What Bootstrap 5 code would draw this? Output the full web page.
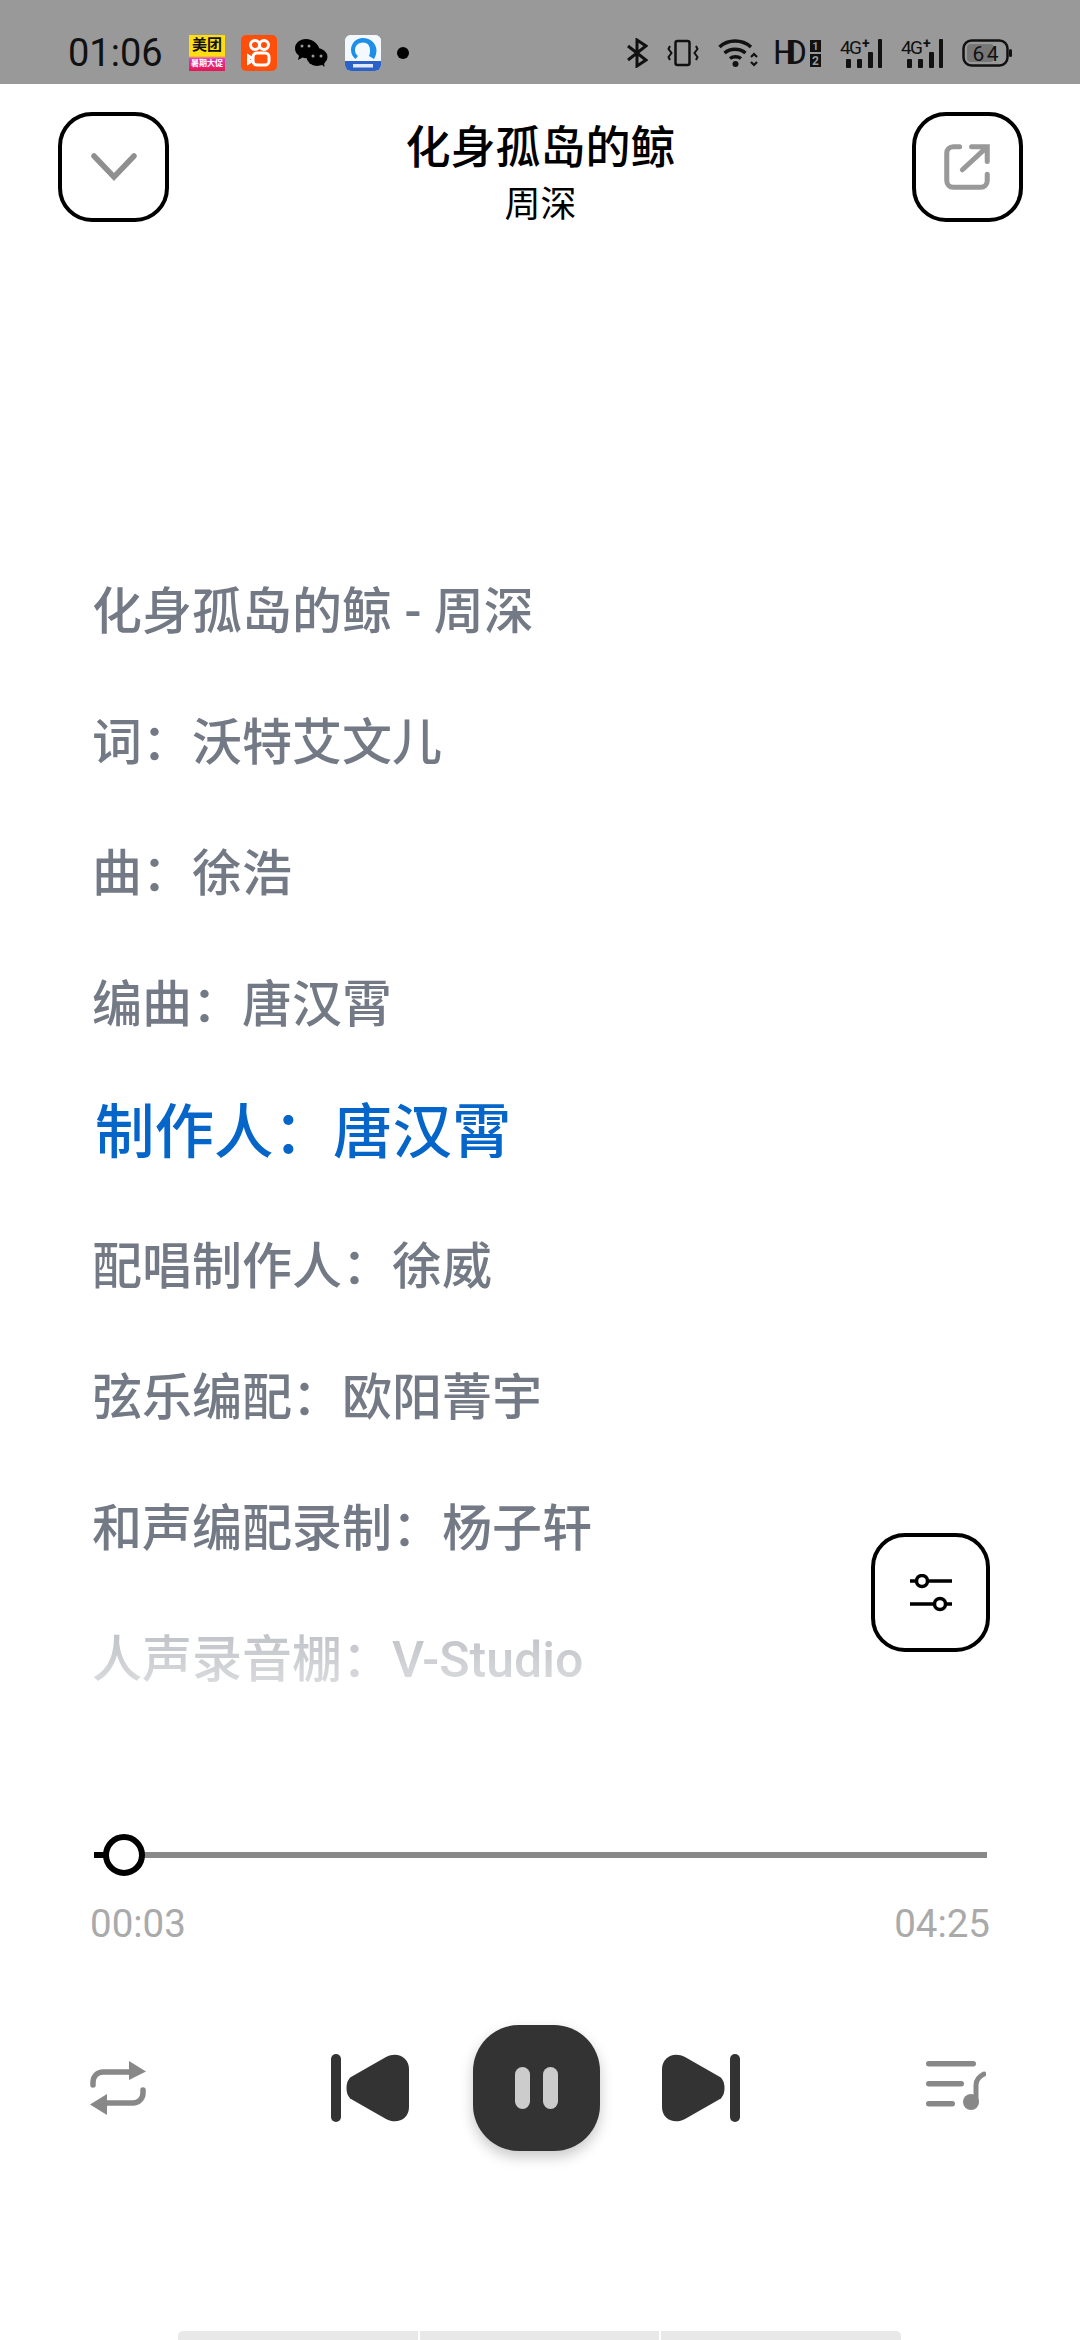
<!DOCTYPE html>
<html lang="zh-CN">
<head>
    <meta charset="UTF-8">
    <meta name="viewport" content="width=device-width, initial-scale=1.0">
    <link href="https://cdn.jsdelivr.net/npm/bootstrap@5.3.3/dist/css/bootstrap.min.css" rel="stylesheet">
    <script src="https://cdn.jsdelivr.net/npm/bootstrap@5.3.3/dist/js/bootstrap.bundle.min.js"></script>
    <style>
        html, body { margin: 0; background: #fff; }
        body { width: 1080px; height: 2340px; overflow: hidden; font-family: Roboto, "Noto Sans CJK SC", sans-serif; }
        .page-wrap { height: 2340px; position: relative; }

        /* status bar */
        .status-bar { height: 84px; background: #999; padding: 22px 68px 0; color: #111; flex: none; }
        .status-time { font-size: 38px; width: 92px; line-height: 1; margin-right: 29px; font-weight: 400; }
        .status-left { gap: 16px; }
        .status-right { gap: 19px; height: 50px; }
        .hd-mark { margin-left: -4px; }
        .status-bar svg { display: block; }
        .mt-logo { width: 36px; height: 36px; background: linear-gradient(#ffdd14 0 58%, #d93cc0 66%, #e8154f 100%); color: #111; overflow: hidden; font-weight: 700; }
        .mt-top { font-size: 15px; line-height: 21px; height: 21px; }
        .mt-sub { font-size: 8px; line-height: 15px; height: 15px; color: #fff; }
        .ks-logo { width: 36px; height: 36px; background: #ff4f0a; border-radius: 5px; }
        .qq-logo { width: 36px; height: 36px; background: #fff; border-radius: 6px; overflow: hidden; }

        /* top bar */
        .top-bar { height: 140px; padding: 28px 57px 0 58px; flex: none; }
        .square-btn { width: 111px; height: 110px; border: 4.5px solid #000; border-radius: 34px; background: #fff; padding: 0; flex: none; }
        .song-head { text-align: center; color: #000; }
        .song-title { font-size: 45px; line-height: 66px; font-weight: 500; margin: 0; font-family: "Noto Sans CJK SC", sans-serif; }
        .song-artist { font-size: 36px; line-height: 44px; margin-top: 1px; font-family: "Noto Sans CJK SC", sans-serif; font-weight: 400; }

        /* lyrics */
        .lyric-pane { height: 1500px; padding: 323px 0 0 92px; flex: none;
            -webkit-mask-image: linear-gradient(#000 0, #000 1345px, rgba(0,0,0,.5) 1395px, rgba(0,0,0,.24) 1470px, transparent 1490px);
            mask-image: linear-gradient(#000 0, #000 1345px, rgba(0,0,0,.5) 1395px, rgba(0,0,0,.24) 1470px, transparent 1490px); }
        .lyric-line { height: 131px; line-height: 131px; font-size: 50px; font-weight: 500; color: #747a85; white-space: nowrap; margin: 0; }
        .lyric-line.now { font-size: 59.5px; color: #0565c8; padding-left: 3px; line-height: 125px; }

        .tune-btn { position: absolute; left: 871px; top: 1533px; width: 119px; height: 119px; border: 4.5px solid #000; border-radius: 34px; background: #fff; padding: 0; }

        /* progress */
        .seek-wrap { position: absolute; left: 94px; right: 93px; top: 1834px; height: 42px; }
        .seek-track { height: 6px; background: #888; width: 100%; }
        .seek-done { height: 6px; width: 12px; background: #000; }
        .seek-thumb { position: absolute; left: 9px; top: 0; width: 42px; height: 42px; border: 6px solid #000; border-radius: 50%; background: #fff; }
        .time-row { position: absolute; left: 90px; right: 90px; top: 1901px; font-size: 38.500px; line-height: 46px; color: #aaa; font-family: Roboto, sans-serif; }

        /* controls */
        .ctl-row { position: absolute; left: 0; right: 0; top: 2025px; height: 126px; }
        .ctl-btn { background: none; border: 0; padding: 0; position: absolute; line-height: 0; }
        .ctl-repeat { left: 90px; top: 34px; }
        .ctl-prev { left: 331px; top: 29px; }
        .ctl-next { left: 661px; top: 29px; }
        .ctl-list { left: 926px; top: 36px; }
        .play-btn { position: absolute; left: 473px; top: 0; width: 127px; height: 126px; background: #333; border: 0; border-radius: 46px; box-shadow: 0 6px 14px rgba(0,0,0,.22); gap: 13px; padding: 0; }
        .pause-bar { width: 15px; height: 42px; background: #ccc; border-radius: 8px; }

        /* bottom handle */
        .home-strip { position: absolute; left: 178px; width: 723px; bottom: 0; height: 9px; gap: 2px; }
        .home-strip div { flex: 1; background: #e8e8e8; }
        .home-strip div:first-child { border-radius: 5px 0 0 0; }
        .home-strip div:last-child { border-radius: 0 5px 0 0; }
    </style>
    <title>化身孤岛的鲸</title>
</head>
<body>
<div class="page-wrap d-flex flex-column">

    <div class="status-bar d-flex align-items-center">
        <div class="status-time">01:06</div>
        <div class="d-flex align-items-center status-left">
            <div class="mt-logo text-center">
                <div class="mt-top">美团</div>
                <div class="mt-sub">暑期大促</div>
            </div>
            <div class="ks-logo d-flex align-items-center justify-content-center">
                <svg width="24" height="30" viewBox="0 0 24 30" fill="none" stroke="#fff" stroke-width="3">
                    <circle cx="8" cy="7" r="4.500"/><circle cx="17" cy="7" r="4.500"/>
                    <rect x="6" y="15" width="16" height="12" rx="4"/>
                    <path d="M6 21 1.500 18v7L6 22"/>
                </svg>
            </div>
            <svg width="36" height="30" viewBox="0 0 36 30">
                <path d="M13 1C6.500 1 2 5.300 2 10.500c0 3 1.500 5.500 4 7.300L5 22l4.500-2.400c1.500.4 3 .6 4.500.5 2-5 8-8 13-7C26 6 20 1 13 1z" fill="#000"/>
                <ellipse cx="24" cy="19" rx="10.500" ry="9" fill="#000"/>
                <path d="M28 26l3.500 3-.5-5z" fill="#000"/>
                <circle cx="9" cy="8" r="1.500" fill="#999"/><circle cx="16" cy="8" r="1.500" fill="#999"/>
                <circle cx="20" cy="18" r="1.500" fill="#999"/><circle cx="28" cy="18" r="1.500" fill="#999"/>
            </svg>
            <div class="qq-logo">
                <svg width="36" height="36" viewBox="0 0 36 36">
                    <rect x="0" y="0" width="36" height="27" fill="#f4f9ff"/>
                    <path d="M18 3C11 3 6 8.500 6 15c0 4 2 7 4.500 9l2.500-3c-2-1.500-3-3.500-3-6 0-4.500 3.500-7.500 8-7.500s7 3 7 7.500c0 2 0 4-1 6l5 3c1.500-2.500 2.500-5.500 2.500-9C31 8 25.500 3 18 3z" fill="#1d8fe8"/>
                    <rect x="0" y="26" width="36" height="10" fill="#2a62c8"/>
                    <rect x="8" y="29" width="20" height="3.500" fill="#dfe9fb"/>
                </svg>
            </div>
            <svg width="12" height="12" viewBox="0 0 12 12"><circle cx="6" cy="6" r="6" fill="#000"/></svg>
        </div>

        <div class="d-flex align-items-center status-right ms-auto">
            <svg width="22" height="30" viewBox="0 0 22 30" fill="none" stroke="#111" stroke-width="3">
                <path d="M2 8l18 14-9 6V2l9 6L2 22"/>
            </svg>
            <svg width="32" height="28" viewBox="0 0 32 28" fill="none" stroke="#111" stroke-width="2.500">
                <rect x="8.500" y="2" width="14" height="24" rx="2"/>
                <path d="M3 7l-1.500 3 3 4-3 4 1.500 3M29 7l1.500 3-3 4 3 4-1.500 3" stroke-width="2"/>
            </svg>
            <svg width="40" height="30" viewBox="0 0 40 30" fill="none" stroke="#111" stroke-width="3.500">
                <path d="M1.500 9C10 1 24 1 33 9M6.500 15c6-5 15-5 21 0M12 20.500c3-2.500 8-2.500 11 0"/>
                <circle cx="17.500" cy="26" r="3" fill="#111" stroke="none"/>
                <path d="M33 19l3-3 3 3M33 24l3 3 3-3" stroke-width="2.200"/>
            </svg>
            <svg class="hd-mark" width="48" height="50" viewBox="0 -11 48 50">
                <text x="0" y="25" font-family="Roboto, sans-serif" font-size="33" fill="#111" textLength="34">HD</text>
                <rect x="37" y="1" width="11" height="12" fill="#111"/>
                <rect x="37" y="15" width="11" height="13" fill="#111"/>
                <text x="42.500" y="11" font-family="Roboto, sans-serif" font-size="11" font-weight="700" fill="#999" text-anchor="middle">1</text>
                <text x="42.500" y="26" font-family="Roboto, sans-serif" font-size="12" font-weight="700" fill="#999" text-anchor="middle">2</text>
            </svg>
            <svg width="42" height="50" viewBox="0 -10 42 50">
                <text x="0" y="16" font-family="Roboto, sans-serif" font-size="19" fill="#111" textLength="22">4G</text>
                <text x="22" y="10" font-family="Roboto, sans-serif" font-size="14" font-weight="700" fill="#111">+</text>
                <rect x="6" y="21" width="5" height="9" rx="1" fill="#111"/><rect x="17" y="21" width="5" height="9" rx="1" fill="#111"/>
                <rect x="28" y="14" width="5" height="16" rx="1" fill="#111"/><rect x="38" y="1" width="4" height="29" rx="1" fill="#111"/>
            </svg>
            <svg width="42" height="50" viewBox="0 -10 42 50">
                <text x="0" y="16" font-family="Roboto, sans-serif" font-size="19" fill="#111" textLength="22">4G</text>
                <text x="22" y="10" font-family="Roboto, sans-serif" font-size="14" font-weight="700" fill="#111">+</text>
                <rect x="6" y="21" width="5" height="9" rx="1" fill="#111"/><rect x="17" y="21" width="5" height="9" rx="1" fill="#111"/>
                <rect x="28" y="14" width="5" height="16" rx="1" fill="#111"/><rect x="38" y="1" width="4" height="29" rx="1" fill="#111"/>
            </svg>
            <svg width="50" height="44" viewBox="0 -8 50 44">
                <rect x="1.500" y="1.500" width="44" height="25" rx="8" fill="none" stroke="#111" stroke-width="2.500"/>
                <rect x="5" y="5" width="27" height="18" rx="4" fill="#777"/>
                <rect x="47" y="10" width="3" height="8" rx="1.500" fill="#111"/>
                <text x="23.500" y="22" font-family="Roboto, sans-serif" font-size="21" fill="#111" text-anchor="middle" textLength="26">64</text>
            </svg>
        </div>
    </div>

    <div class="top-bar d-flex justify-content-between align-items-start">
        <button class="square-btn d-flex align-items-center justify-content-center" type="button">
            <svg width="46" height="28" viewBox="0 0 46 28" fill="none" stroke="#8f8f8f" stroke-width="5.500" stroke-linecap="round"><path d="M3 3l20 21L43 3"/></svg>
        </button>
        <div class="song-head">
            <h1 class="song-title">化身孤岛的鲸</h1>
            <div class="song-artist">周深</div>
        </div>
        <button class="square-btn d-flex align-items-center justify-content-center" type="button">
            <svg width="46" height="46" viewBox="0 0 50 50" fill="none" stroke="#999" stroke-width="5.500" stroke-linecap="round">
                <path d="M17 3H10a7 7 0 0 0-7 7v30a7 7 0 0 0 7 7h30a7 7 0 0 0 7-7v-7"/>
                <path d="M20 28 46 4M30 3h17v16"/>
            </svg>
        </button>
    </div>

    <div class="lyric-pane">
        <p class="lyric-line">化身孤岛的鲸 - 周深</p>
        <p class="lyric-line">词：沃特艾文儿</p>
        <p class="lyric-line">曲：徐浩</p>
        <p class="lyric-line">编曲：唐汉霄</p>
        <p class="lyric-line now">制作人：唐汉霄</p>
        <p class="lyric-line">配唱制作人：徐威</p>
        <p class="lyric-line">弦乐编配：欧阳菁宇</p>
        <p class="lyric-line">和声编配录制：杨子轩</p>
        <p class="lyric-line">人声录音棚：V-Studio</p>
    </div>

    <button class="tune-btn d-flex align-items-center justify-content-center" type="button">
        <svg width="42" height="38" viewBox="0 0 42 38" fill="none" stroke="#000" stroke-width="3.500">
            <path d="M0 7h6M18 7h24M0 30h24M36 30h6"/>
            <circle cx="12" cy="7" r="5.500"/><circle cx="30" cy="30" r="5.500"/>
        </svg>
    </button>

    <div class="seek-wrap d-flex align-items-center">
        <div class="seek-done"></div>
        <div class="seek-track"></div>
        <div class="seek-thumb"></div>
    </div>
    <div class="time-row d-flex justify-content-between">
        <span>00:03</span>
        <span>04:25</span>
    </div>

    <div class="ctl-row">
        <button class="ctl-btn ctl-repeat" type="button">
            <svg width="56" height="56" viewBox="0 0 56 56" fill="none" stroke="#888" stroke-width="5.500" stroke-linecap="round">
                <path d="M3 26v-3a10 10 0 0 1 10-10h28"/>
                <path d="M53 31v3a10 10 0 0 1-10 10H15"/>
                <path d="M39 2l17 10.500L39 21z" fill="#888" stroke="none"/>
                <path d="M17 35 0 45.500 17 56z" fill="#888" stroke="none"/>
            </svg>
        </button>
        <button class="ctl-btn ctl-prev" type="button">
            <svg width="79" height="68" viewBox="0 0 79 68" fill="#333">
                <rect x="0" y="0" width="10" height="68" rx="5"/>
                <path d="M20 23 55 3c11-6 23 0 23 12v38c0 12-12 18-23 12L20 45C14 41 14 27 20 23z"/>
            </svg>
        </button>
        <button class="play-btn d-flex align-items-center justify-content-center" type="button">
            <span class="pause-bar"></span><span class="pause-bar"></span>
        </button>
        <button class="ctl-btn ctl-next" type="button">
            <svg width="79" height="68" viewBox="0 0 79 68" fill="#333">
                <rect x="69" y="0" width="10" height="68" rx="5"/>
                <path d="M59 23 24 3C13-3 1 3 1 15v38c0 12 12 18 23 12L59 45C65 41 65 27 59 23z"/>
            </svg>
        </button>
        <button class="ctl-btn ctl-list" type="button">
            <svg width="60" height="50" viewBox="0 0 60 50" fill="#888">
                <rect x="0" y="0" width="50" height="5.500" rx="2.750"/>
                <rect x="0" y="20" width="38" height="5.500" rx="2.750"/>
                <rect x="0" y="40" width="29" height="5.500" rx="2.750"/>
                <circle cx="45" cy="41" r="8"/>
                <path d="M50 41V24c0-4 2-8 8-11" fill="none" stroke="#888" stroke-width="5" stroke-linecap="round"/>
            </svg>
        </button>
    </div>

    <div class="home-strip d-flex">
        <div></div><div></div><div></div>
    </div>

</div>
</body>
</html>
